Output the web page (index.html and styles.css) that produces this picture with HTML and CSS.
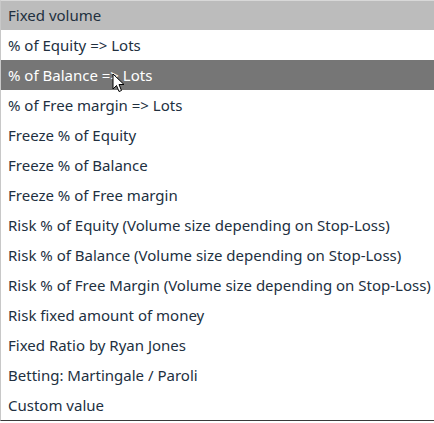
FILE: index.html
```html
<!DOCTYPE html>
<html lang="en">
<head>
    <meta charset="UTF-8">
    <title>Volume mode</title>
    <link rel="stylesheet" href="styles.css">
</head>
<body>
    <ul class="dropdown">
        <li class="item selected">Fixed volume</li>
        <li class="item">% of Equity =&gt; Lots</li>
        <li class="item hover">% of Balance =&gt; Lots
            <svg class="cursor" width="13" height="20" viewBox="0 0 13 20">
                <path d="M1 1 L1 16 L4.5 12.5 L7 18.5 L9.5 17.5 L7 11.5 L12 11.5 Z" fill="#fff" stroke="#000" stroke-width="1" stroke-linejoin="round"/>
            </svg>
        </li>
        <li class="item">% of Free margin =&gt; Lots</li>
        <li class="item">Freeze % of Equity</li>
        <li class="item">Freeze % of Balance</li>
        <li class="item">Freeze % of Free margin</li>
        <li class="item">Risk % of Equity (Volume size depending on Stop-Loss)</li>
        <li class="item">Risk % of Balance (Volume size depending on Stop-Loss)</li>
        <li class="item">Risk % of Free Margin (Volume size depending on Stop-Loss)</li>
        <li class="item">Risk fixed amount of money</li>
        <li class="item">Fixed Ratio by Ryan Jones</li>
        <li class="item">Betting: Martingale / Paroli</li>
        <li class="item">Custom value</li>
    </ul>
</body>
</html>
```
FILE: styles.css
```css
body {
    margin: 0;
    background: #fff;
    font-family: 'Noto Sans', 'Open Sans', sans-serif;
}
.dropdown {
    list-style: none;
    margin: 0;
    padding: 0;
    border-top: 1px solid #d8d8d8;
    border-left: 1px solid #c8c8c8;
    border-bottom: 1px solid #3a3a3a;
    background: #fff;
}
.item {
    position: relative;
    height: 30px;
    line-height: 30px;
    padding-left: 7px;
    font-size: 15px;
    color: #22303f;
    white-space: nowrap;
}
.item:first-child {
    height: 29px;
    line-height: 29px;
}
.selected {
    background: #bcbcbc;
}
.hover {
    background: #767676;
    color: #fff;
}
.cursor {
    position: absolute;
    left: 111px;
    top: 13px;
}
```
